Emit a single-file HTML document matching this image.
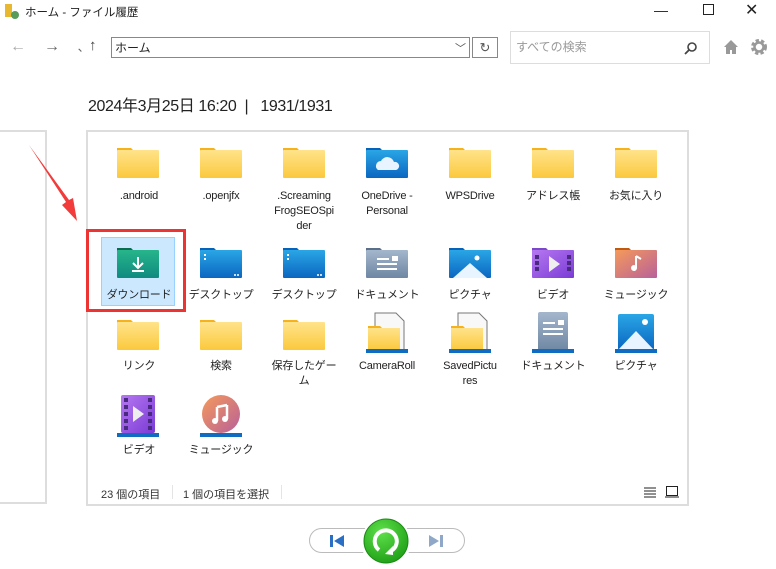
<!DOCTYPE html>
<html><head><meta charset="utf-8">
<style>
body{margin:0;width:776px;height:569px;background:#fff;position:relative;overflow:hidden;font-family:"Liberation Sans","Noto Sans CJK JP",sans-serif;color:#222}
.a{position:absolute}
.lbl{position:absolute;width:84px;text-align:center;font-size:11px;line-height:15px;color:#222;letter-spacing:-0.2px}
svg.i{position:absolute}
</style></head><body>
<svg width="0" height="0" style="position:absolute">
<defs>
<linearGradient id="fy" x1="0" y1="0" x2="0" y2="1"><stop offset="0" stop-color="#ffe38a"/><stop offset="1" stop-color="#fbc93d"/></linearGradient>
<linearGradient id="fb" x1="0" y1="0" x2="0" y2="1"><stop offset="0" stop-color="#2aa6e6"/><stop offset="1" stop-color="#0a66c0"/></linearGradient>
<linearGradient id="fg" x1="0" y1="0" x2="0" y2="1"><stop offset="0" stop-color="#27b58a"/><stop offset="1" stop-color="#0f8a80"/></linearGradient>
<linearGradient id="fgr" x1="0" y1="0" x2="0" y2="1"><stop offset="0" stop-color="#a3b6cc"/><stop offset="1" stop-color="#6f87a3"/></linearGradient>
<linearGradient id="fp" x1="0" y1="0" x2="1" y2="1"><stop offset="0" stop-color="#b678f0"/><stop offset="1" stop-color="#7a3bd6"/></linearGradient>
<linearGradient id="fo" x1="0" y1="0" x2="1" y2="1"><stop offset="0" stop-color="#f59a5a"/><stop offset="1" stop-color="#b8609a"/></linearGradient>
<symbol id="fold" viewBox="0 0 42 36"><path d="M0 4h14l3 3h0v4H0z" fill="#f5b21c"/><rect x="0" y="6" width="42" height="28" rx="1" fill="url(#fy)"/></symbol>
</defs></svg>

<svg class="a" style="left:4px;top:3px" width="16" height="16"><rect x="1" y="1" width="7" height="13" fill="#e8b830"/><circle cx="11" cy="12" r="4" fill="#5a9a5a"/></svg>
<div class="a" style="left:25px;top:4px;font-size:11.5px">ホーム - ファイル履歴</div>
<div class="a" style="left:654px;top:2px;font-size:14px">—</div>
<div class="a" style="left:703px;top:4px;width:9px;height:9px;border:1px solid #222"></div>
<div class="a" style="left:745px;top:0px;font-size:16px;color:#222">✕</div>

<div class="a" style="left:10px;top:38px;font-size:16px;color:#aaa">←</div>
<div class="a" style="left:44px;top:38px;font-size:16px;color:#666">→</div>
<div class="a" style="left:78px;top:38px;font-size:12px;color:#666">､</div>
<div class="a" style="left:89px;top:37px;font-size:15px;color:#444">↑</div>
<div class="a" style="left:111px;top:37px;width:359px;height:21px;border:1px solid #888;font-size:12px;line-height:21px;padding-left:3px;box-sizing:border-box">ホーム</div>
<div class="a" style="left:455px;top:40px;font-size:11px;color:#555">﹀</div>
<div class="a" style="left:472px;top:37px;width:26px;height:21px;border:1px solid #888;box-sizing:border-box;text-align:center;font-size:13px;line-height:19px;color:#555">↻</div>
<div class="a" style="left:510px;top:31px;width:200px;height:33px;border:1px solid #ddd;box-sizing:border-box;font-size:12px;line-height:31px;padding-left:5px;color:#999">すべての検索</div>
<svg class="a" style="left:684px;top:41px" width="14" height="14"><circle cx="8" cy="6" r="4" fill="none" stroke="#444" stroke-width="1.6"/><line x1="5" y1="9" x2="1" y2="13" stroke="#444" stroke-width="1.8"/></svg>
<svg class="a" style="left:723px;top:39px" width="16" height="16"><path d="M8 1L1 8h2v7h4v-4h2v4h4V8h2z" fill="#999"/></svg>
<svg class="a" style="left:750px;top:38px" width="18" height="18"><circle cx="9" cy="9" r="6" fill="none" stroke="#999" stroke-width="4" stroke-dasharray="3 2"/><circle cx="9" cy="9" r="4.5" fill="none" stroke="#999" stroke-width="2.5"/></svg>

<div class="a" style="left:88px;top:92px;font-size:16px;color:#222;letter-spacing:-0.4px">2024年3月25日 16:20 &nbsp;| &nbsp; 1931/1931</div>

<div class="a" style="left:-2px;top:130px;width:49px;height:374px;border:2px solid #ddd;box-sizing:border-box"></div>
<div class="a" style="left:86px;top:130px;width:603px;height:376px;border:2px solid #ddd;box-sizing:border-box"></div>

<svg class="a" style="left:25px;top:140px" width="60" height="85"><path d="M4 5L41 62L37 65L52 81L48 58L44 60z" fill="#f23b3b"/></svg>

<div class="a" style="left:101px;top:237px;width:74px;height:69px;background:#cce8ff;border:1px solid #99d1ff;box-sizing:border-box"></div>
<div class="a" style="left:86px;top:229px;width:100px;height:83px;border:3px solid #ee3333;box-sizing:border-box"></div>

<svg class="i" style="left:117px;top:144px" width="42" height="36"><use href="#fold"/></svg>
<svg class="i" style="left:200px;top:144px" width="42" height="36"><use href="#fold"/></svg>
<svg class="i" style="left:283px;top:144px" width="42" height="36"><use href="#fold"/></svg>
<svg class="i" style="left:366px;top:144px" width="42" height="36"><path d="M0 4h14l3 3v4H0z" fill="#0a62b8"/><rect y="6" width="42" height="28" rx="1" fill="url(#fb)"/><path d="M12 26a5 5 0 0 1 3-9a7 7 0 0 1 13 1a4 4 0 0 1 2 8z" fill="#e8f4ff"/></svg>
<svg class="i" style="left:449px;top:144px" width="42" height="36"><use href="#fold"/></svg>
<svg class="i" style="left:532px;top:144px" width="42" height="36"><use href="#fold"/></svg>
<svg class="i" style="left:615px;top:144px" width="42" height="36"><use href="#fold"/></svg>
<div class="lbl" style="left:97px;top:189px">.android</div>
<div class="lbl" style="left:179px;top:189px">.openjfx</div>
<div class="lbl" style="left:262px;top:189px">.Screaming<br>FrogSEOSpi<br>der</div>
<div class="lbl" style="left:345px;top:189px">OneDrive -<br>Personal</div>
<div class="lbl" style="left:428px;top:189px">WPSDrive</div>
<div class="lbl" style="left:511px;top:189px">アドレス帳</div>
<div class="lbl" style="left:594px;top:189px">お気に入り</div>

<svg class="i" style="left:117px;top:244px" width="42" height="36"><path d="M0 4h14l3 3v4H0z" fill="#0d6b50"/><rect y="6" width="42" height="28" rx="1" fill="url(#fg)"/><path d="M21 13v10M16 19l5 5 5-5M15 27h12" stroke="#fff" stroke-width="2" fill="none"/></svg>
<svg class="i" style="left:200px;top:244px" width="42" height="36"><path d="M0 4h14l3 3v4H0z" fill="#0a62b8"/><rect y="6" width="42" height="28" rx="1" fill="url(#fb)"/><rect x="4" y="10" width="2" height="2" fill="#fff"/><rect x="4" y="14" width="2" height="2" fill="#fff"/><rect x="34" y="30" width="2" height="2" fill="#cde"/><rect x="37" y="30" width="2" height="2" fill="#cde"/></svg>
<svg class="i" style="left:283px;top:244px" width="42" height="36"><path d="M0 4h14l3 3v4H0z" fill="#0a62b8"/><rect y="6" width="42" height="28" rx="1" fill="url(#fb)"/><rect x="4" y="10" width="2" height="2" fill="#fff"/><rect x="4" y="14" width="2" height="2" fill="#fff"/><rect x="34" y="30" width="2" height="2" fill="#cde"/><rect x="37" y="30" width="2" height="2" fill="#cde"/></svg>
<svg class="i" style="left:366px;top:244px" width="42" height="36"><path d="M0 4h14l3 3v4H0z" fill="#5b7088"/><rect y="6" width="42" height="28" rx="1" fill="url(#fgr)"/><path d="M11 15h12M11 20h20M11 25h20" stroke="#fff" stroke-width="2"/><rect x="26" y="12" width="6" height="5" fill="#fff"/></svg>
<svg class="i" style="left:449px;top:244px" width="42" height="36"><path d="M0 4h14l3 3v4H0z" fill="#0a62b8"/><rect y="6" width="42" height="28" rx="1" fill="url(#fb)"/><path d="M4 34L21 19L38 34z" fill="#e8f4ff"/><circle cx="28" cy="14" r="2.5" fill="#fff"/></svg>
<svg class="i" style="left:532px;top:244px" width="42" height="36"><path d="M0 4h14l3 3v4H0z" fill="#7a48c8"/><rect y="6" width="42" height="28" rx="1" fill="url(#fp)"/><g fill="#4a2a80"><rect x="3" y="11" width="4" height="4"/><rect x="3" y="17" width="4" height="4"/><rect x="3" y="23" width="4" height="4"/><rect x="35" y="11" width="4" height="4"/><rect x="35" y="17" width="4" height="4"/><rect x="35" y="23" width="4" height="4"/></g><path d="M17 12v16l11-8z" fill="#eee"/></svg>
<svg class="i" style="left:615px;top:244px" width="42" height="36"><path d="M0 4h14l3 3v4H0z" fill="#c05a10"/><rect y="6" width="42" height="28" rx="1" fill="url(#fo)"/><path d="M21 12v12" stroke="#fff" stroke-width="2"/><circle cx="19" cy="24" r="3" fill="#fff"/><path d="M21 12l5 3" stroke="#fff" stroke-width="2"/></svg>
<div class="lbl" style="left:97px;top:288px">ダウンロード</div>
<div class="lbl" style="left:179px;top:288px">デスクトップ</div>
<div class="lbl" style="left:262px;top:288px">デスクトップ</div>
<div class="lbl" style="left:345px;top:288px">ドキュメント</div>
<div class="lbl" style="left:428px;top:288px">ピクチャ</div>
<div class="lbl" style="left:511px;top:288px">ビデオ</div>
<div class="lbl" style="left:594px;top:288px">ミュージック</div>

<svg class="i" style="left:117px;top:316px" width="42" height="36"><use href="#fold"/></svg>
<svg class="i" style="left:200px;top:316px" width="42" height="36"><use href="#fold"/></svg>
<svg class="i" style="left:283px;top:316px" width="42" height="36"><use href="#fold"/></svg>
<svg class="i" style="left:366px;top:312px" width="42" height="42"><path d="M9 1h21l8 8v30H9z" fill="#f8f8f8" stroke="#777"/><path d="M2 14h12l2 2v3H2z" fill="#f5b21c"/><rect x="2" y="16" width="32" height="22" fill="url(#fy)"/><rect x="0" y="37" width="42" height="4" fill="#0f6cc0"/></svg>
<svg class="i" style="left:449px;top:312px" width="42" height="42"><path d="M9 1h21l8 8v30H9z" fill="#f8f8f8" stroke="#777"/><path d="M2 14h12l2 2v3H2z" fill="#f5b21c"/><rect x="2" y="16" width="32" height="22" fill="url(#fy)"/><rect x="0" y="37" width="42" height="4" fill="#0f6cc0"/></svg>
<svg class="i" style="left:532px;top:312px" width="42" height="42"><rect x="6" y="0" width="30" height="39" rx="2" fill="url(#fgr)"/><path d="M11 11h12M11 17h20M11 22h20" stroke="#fff" stroke-width="2"/><rect x="26" y="8" width="6" height="5" fill="#fff"/><rect x="0" y="37" width="42" height="4" fill="#0f6cc0"/></svg>
<svg class="i" style="left:615px;top:312px" width="42" height="42"><rect x="3" y="2" width="36" height="36" rx="2" fill="url(#fb)"/><path d="M3 38L21 19L39 38z" fill="#e8f4ff"/><circle cx="30" cy="10" r="3" fill="#fff"/><rect x="0" y="37" width="42" height="4" fill="#0f6cc0"/></svg>
<div class="lbl" style="left:97px;top:359px">リンク</div>
<div class="lbl" style="left:179px;top:359px">検索</div>
<div class="lbl" style="left:262px;top:359px">保存したゲー<br>ム</div>
<div class="lbl" style="left:345px;top:359px">CameraRoll</div>
<div class="lbl" style="left:428px;top:359px">SavedPictu<br>res</div>
<div class="lbl" style="left:511px;top:359px">ドキュメント</div>
<div class="lbl" style="left:594px;top:359px">ピクチャ</div>

<svg class="i" style="left:117px;top:395px" width="42" height="42"><rect x="4" y="0" width="34" height="38" rx="2" fill="url(#fp)"/><g fill="#4a2a80"><rect x="7" y="3" width="4" height="4"/><rect x="7" y="10" width="4" height="4"/><rect x="7" y="17" width="4" height="4"/><rect x="7" y="24" width="4" height="4"/><rect x="7" y="31" width="4" height="4"/><rect x="31" y="3" width="4" height="4"/><rect x="31" y="10" width="4" height="4"/><rect x="31" y="17" width="4" height="4"/><rect x="31" y="24" width="4" height="4"/><rect x="31" y="31" width="4" height="4"/></g><path d="M16 11v16l11-8z" fill="#eee"/><rect x="0" y="38" width="42" height="4" fill="#0f6cc0"/></svg>
<svg class="i" style="left:200px;top:395px" width="42" height="42"><circle cx="21" cy="19" r="19" fill="url(#fo)"/><path d="M17 12v14M27 10v14M17 12l10-2" stroke="#fff" stroke-width="2.5"/><circle cx="15" cy="26" r="3" fill="#fff"/><circle cx="25" cy="24" r="3" fill="#fff"/><rect x="0" y="38" width="42" height="4" fill="#0f6cc0"/></svg>
<div class="lbl" style="left:97px;top:443px">ビデオ</div>
<div class="lbl" style="left:179px;top:443px">ミュージック</div>

<div class="a" style="left:101px;top:486px;font-size:11px;color:#333">23 個の項目</div>
<div class="a" style="left:172px;top:485px;width:1px;height:14px;background:#e4e4e4"></div>
<div class="a" style="left:183px;top:486px;font-size:11px;color:#333">1 個の項目を選択</div>
<div class="a" style="left:281px;top:485px;width:1px;height:14px;background:#e4e4e4"></div>
<svg class="a" style="left:643px;top:486px" width="14" height="12"><path d="M1 2h12M1 5h12M1 8h12M1 11h12" stroke="#222"/></svg>
<svg class="a" style="left:665px;top:485px" width="14" height="13"><rect x="1.5" y="1.5" width="11" height="9" fill="none" stroke="#222"/><path d="M0 12h14" stroke="#222"/></svg>

<div class="a" style="left:309px;top:528px;width:156px;height:25px;border:1px solid #bbb;border-radius:13px;box-sizing:border-box;background:#fff"></div>
<svg class="a" style="left:329px;top:534px" width="16" height="14"><rect x="1" y="1" width="3" height="12" fill="#2a6fc4"/><path d="M15 1v12L5 7z" fill="#2a6fc4"/></svg>
<svg class="a" style="left:428px;top:534px" width="16" height="14"><path d="M1 1v12L11 7z" fill="#8fa8c8"/><rect x="12" y="1" width="3" height="12" fill="#8fa8c8"/></svg>
<div class="a" style="left:361px;top:517px;width:50px;height:50px;border-radius:50%;background:#fff"></div>
<svg class="a" style="left:363px;top:518px" width="46" height="46"><defs><radialGradient id="gg" cx="0.4" cy="0.3" r="0.8"><stop offset="0" stop-color="#5ee04a"/><stop offset="1" stop-color="#1a9a12"/></radialGradient></defs><circle cx="23" cy="23" r="22" fill="url(#gg)" stroke="#1b8a14"/><path d="M16 32a11 11 0 1 1 12 1" fill="none" stroke="#fff" stroke-width="4"/><path d="M22 36l8-8 0 9z" fill="#fff"/></svg>
</body></html>
